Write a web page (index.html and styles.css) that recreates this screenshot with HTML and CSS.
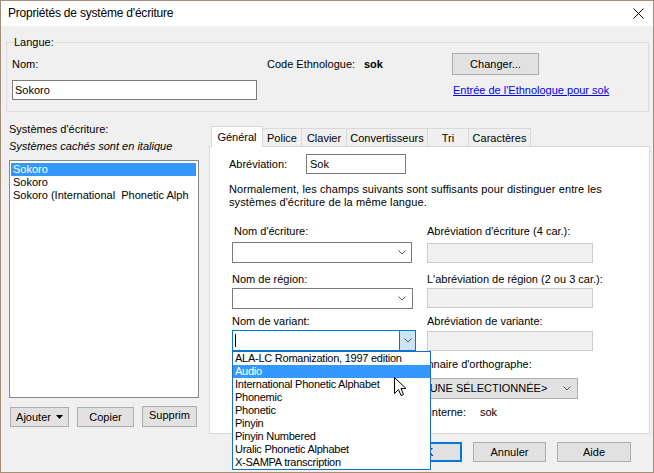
FILE: index.html
```html
<!DOCTYPE html>
<html lang="fr">
<head>
<meta charset="utf-8">
<title>Propriétés de système d'écriture</title>
<link rel="stylesheet" href="styles.css">
</head>
<body>
<div class="window">
  <div class="titlebar">
    <span class="title">Propriétés de système d'écriture</span>
    <svg class="close" width="11" height="11" viewBox="0 0 11 11"><path d="M0.5 0.5 L10.5 10.5 M10.5 0.5 L0.5 10.5" stroke="#000" stroke-width="1" fill="none"/></svg>
  </div>

  <div class="group">
    <span class="legend">Langue:</span>
    <div class="grow r1">
      <span class="lbl-nom">Nom:</span>
      <span class="lbl-code">Code Ethnologue:</span>
      <b class="code">sok</b>
      <div class="btn btn-changer">Changer...</div>
    </div>
    <div class="grow r2">
      <div class="input input-nom">Sokoro</div>
      <a class="link" href="#">Entrée de l'Ethnologue pour sok</a>
    </div>
  </div>

  <div class="main">
    <div class="left">
      <div class="lbl">Systèmes d'écriture:</div>
      <div class="lbl hint">Systèmes cachés sont en italique</div>
      <div class="listbox">
        <div class="item selected">Sokoro</div>
        <div class="item">Sokoro</div>
        <div class="item">Sokoro (International&nbsp; Phonetic Alph</div>
      </div>
      <div class="left-buttons">
        <div class="btn btn-ajouter">Ajouter <svg class="tri" width="7" height="4" viewBox="0 0 7 4"><path d="M0 0 H7 L3.5 4 Z" fill="#000"/></svg></div>
        <div class="btn btn-copier">Copier</div>
        <div class="btn btn-supprim">Supprim</div>
      </div>
    </div>

    <div class="tabcol">
      <div class="tabhead">
        <div class="tab active t-gen">Général</div>
        <div class="tab t-pol">Police</div>
        <div class="tab t-cla">Clavier</div>
        <div class="tab t-con">Convertisseurs</div>
        <div class="tab t-tri">Tri</div>
        <div class="tab t-car">Caractères</div>
      </div>
      <div class="pane">
        <div class="abbr-row">
          <span class="abbr-lbl">Abréviation:</span>
          <div class="input input-abbr">Sok</div>
        </div>
        <p class="para">Normalement, les champs suivants sont suffisants pour distinguer entre les<br>systèmes d'écriture de la même langue.</p>

        <div class="fields">
          <div class="frow frow1">
            <div class="fcell">
              <div class="flbl first">Nom d'écriture:</div>
              <div class="combo c1"><svg class="chev" width="8" height="5" viewBox="0 0 8 5"><path d="M0.5 0.5 L4 4 L7.5 0.5" stroke="#555" fill="none"/></svg></div>
            </div>
            <div class="fcell right">
              <div class="flbl">Abréviation d'écriture (4 car.):</div>
              <div class="dis d1"></div>
            </div>
          </div>
          <div class="frow frow2">
            <div class="fcell">
              <div class="flbl">Nom de région:</div>
              <div class="combo c2"><svg class="chev" width="8" height="5" viewBox="0 0 8 5"><path d="M0.5 0.5 L4 4 L7.5 0.5" stroke="#555" fill="none"/></svg></div>
            </div>
            <div class="fcell right">
              <div class="flbl">L'abréviation de région (2 ou 3 car.):</div>
              <div class="dis d2"></div>
            </div>
          </div>
          <div class="frow frow3">
            <div class="fcell">
              <div class="flbl">Nom de variant:</div>
              <div class="combo focus">
                <div class="combo-edit"><span class="caret"></span></div>
                <div class="combo-btn"><svg class="chev" width="8" height="5" viewBox="0 0 8 5"><path d="M0.5 0.5 L4 4 L7.5 0.5" stroke="#555" fill="none"/></svg></div>
              </div>
            </div>
            <div class="fcell right">
              <div class="flbl">Abréviation de variante:</div>
              <div class="dis d3"></div>
            </div>
          </div>
        </div>

        <div class="lower">
          <div class="flbl">Dictionnaire d'orthographe:</div>
          <div class="combo gray">
            <span class="combo-text">&lt;AUCUNE SÉLECTIONNÉE&gt;</span>
            <svg class="chev" width="8" height="5" viewBox="0 0 8 5"><path d="M0.5 0.5 L4 4 L7.5 0.5" stroke="#555" fill="none"/></svg>
          </div>
          <div class="code-row">
            <span class="code-lbl">Code interne:</span>
            <span>sok</span>
          </div>
        </div>
      </div>
      <div class="footer">
        <div class="btn btn-ok">OK</div>
        <div class="btn btn-foot">Annuler</div>
        <div class="btn btn-foot aide">Aide</div>
      </div>
    </div>
  </div>

  <div class="dropdown">
    <div class="ditem">ALA-LC Romanization, 1997 edition</div>
    <div class="ditem hl">Audio</div>
    <div class="ditem">International Phonetic Alphabet</div>
    <div class="ditem">Phonemic</div>
    <div class="ditem">Phonetic</div>
    <div class="ditem">Pinyin</div>
    <div class="ditem">Pinyin Numbered</div>
    <div class="ditem">Uralic Phonetic Alphabet</div>
    <div class="ditem">X-SAMPA transcription</div>
  </div>

  <svg class="cursor" width="13" height="20" viewBox="0 0 13 20"><path d="M0.5 0.5 L0.5 16.5 L4.5 12.5 L7 18.5 L9.5 17.5 L7 11.5 L12 11.5 Z" fill="#fff" stroke="#000" stroke-width="1" stroke-linejoin="miter"/></svg>
</div>
</body>
</html>
```

FILE: styles.css
```css
* { box-sizing: border-box; }
html, body { margin: 0; padding: 0; }
body {
  font-family: "Liberation Sans", Arial, sans-serif;
  font-size: 11px;
  line-height: 13px;
  color: #000;
  background: #fff;
}
.window {
  position: relative;
  width: 654px;
  height: 473px;
  border: 1px solid #a58e76;
  background: #f0f0f0;
  overflow: hidden;
}
.titlebar {
  height: 25px;
  background: #fff;
  display: flex;
  align-items: center;
  justify-content: space-between;
  padding: 0 9px 0 7px;
}
.title { font-size: 12px; letter-spacing: -0.2px; }
.close { display: block; }

/* group box */
.group {
  position: relative;
  margin: 16px 4px 0 5px;
  height: 70px;
  border: 1px solid #dcdcdc;
  padding: 10px 0 0 5px;
}
.legend {
  position: absolute;
  top: -7px;
  left: 6px;
  padding: 0 1px;
  background: #f0f0f0;
}
.grow { display: flex; align-items: center; }
.r1 { height: 22px; }
.r2 { height: 20px; margin-top: 5px; }
.lbl-nom { width: 255px; }
.lbl-code { width: 97px; }
.code { width: 88px; font-weight: bold; }
.btn {
  display: flex;
  align-items: center;
  justify-content: center;
  background: #e1e1e1;
  border: 1px solid #adadad;
  height: 20px;
}
.btn-changer { width: 87px; height: 22px; }
.input {
  background: #fff;
  border: 1px solid #7a7a7a;
  height: 20px;
  display: flex;
  align-items: center;
}
.input-nom { width: 245px; padding-left: 2px; }
.link { margin-left: 196px; color: #0000ff; text-decoration: underline; }

/* main */
.main { display: flex; padding-left: 8px; }
.left { width: 190px; padding-top: 11px; }
.hint { font-style: italic; margin-top: 4px; }
.listbox {
  margin-top: 7px;
  height: 238px;
  border: 1px solid #828790;
  background: #fff;
  padding: 1px 2px 0 1px;
}
.item { height: 13px; padding-left: 2px; white-space: nowrap; overflow: hidden; }
.item.selected { background: #3399ff; color: #fff; margin-top: 1px; }
.left-buttons { display: flex; align-items: flex-start; margin-top: 9px; }
.btn-ajouter { width: 59px; margin-left: 1px; gap: 5px; }
.tri { display: block; }
.btn-copier { width: 57px; margin-left: 8px; }
.btn-supprim { width: 55px; height: 21px; margin-left: 8px; margin-top: -1px; align-items: flex-start; padding-top: 2px; }

/* tabs */
.tabcol { width: 441px; margin-left: 10px; margin-top: 14px; }
.tabhead { display: flex; align-items: flex-end; height: 20px; padding-left: 2px; }
.tab {
  height: 18px;
  border: 1px solid #d9d9d9;
  border-bottom: none;
  background: #f0f0f0;
  margin-left: -1px;
  display: flex;
  align-items: center;
  justify-content: center;
  padding-top: 1px;
}
.tab.active {
  height: 21px;
  margin-left: 0;
  margin-bottom: -1px;
  background: #fff;
  position: relative;
  z-index: 1;
  padding-top: 0;
}
.t-gen { width: 52px; }
.t-pol { width: 40px; }
.t-cla { width: 46px; }
.t-con { width: 82px; }
.t-tri { width: 42px; }
.t-car { width: 63px; }
.pane {
  height: 288px;
  border: 1px solid #d9d9d9;
  background: #fff;
  padding: 7px 0 0 19px;
}
.abbr-row { display: flex; align-items: center; height: 20px; }
.abbr-lbl { width: 77px; }
.input-abbr { width: 100px; padding-left: 3px; }
.para { margin: 9px 0 0 0; letter-spacing: 0.1px; }
.fields { margin-left: 3px; }
.frow { display: flex; }
.frow1 { margin-top: 16px; }
.frow2 { margin-top: 10px; }
.frow3 { margin-top: 6px; }
.fcell { width: 195px; }
.fcell.right { width: 166px; }
.flbl { white-space: nowrap; }
.flbl.first { padding-left: 2px; }
.combo {
  background: #fff;
  border: 1px solid #7a7a7a;
  height: 21px;
  display: flex;
  align-items: center;
  justify-content: flex-end;
  padding-right: 5px;
}
.chev { display: block; }
.c1 { width: 180px; margin-top: 4px; }
.c2 { width: 181px; margin-top: 2px; padding-right: 6px; }
.combo.focus {
  width: 184px;
  margin-top: 2px;
  border-color: #0078d7;
  padding-right: 0;
  align-items: stretch;
}
.combo-edit { flex: 1; display: flex; align-items: center; padding-left: 2px; }
.caret { display: block; width: 1px; height: 13px; background: #000; }
.combo-btn {
  width: 16px;
  border-left: 1px solid #0078d7;
  background: #cce4f7;
  display: flex;
  align-items: center;
  justify-content: center;
}
.dis {
  width: 166px;
  height: 20px;
  background: #f0f0f0;
  border: 1px solid #cccccc;
}
.d1 { margin-top: 5px; }
.d2 { margin-top: 2px; }
.d3 { margin-top: 3px; }
.lower { margin-left: 171px; margin-top: 7px; }
.combo.gray {
  width: 182px;
  margin-left: -4px;
  margin-top: 7px;
  background: #e1e1e1;
  border-color: #adadad;
  justify-content: space-between;
  padding: 0 6px 0 3px;
}
.code-row { display: flex; margin-top: 7px; }
.code-lbl { width: 80px; }

.footer {
  display: flex;
  justify-content: flex-end;
  gap: 11px;
  margin-top: 8px;
  padding-right: 19px;
}
.btn-ok { width: 73px; border: 2px solid #0078d7; }
.btn-foot { width: 73px; }
.btn-foot.aide { width: 74px; }

/* dropdown overlay */
.dropdown {
  position: absolute;
  left: 231px;
  top: 350px;
  width: 199px;
  height: 119px;
  background: #fff;
  border: 1px solid #1a6fc4;
  z-index: 5;
}
.ditem { height: 13px; padding-left: 2px; white-space: nowrap; letter-spacing: -0.25px; }
.ditem.hl { background: #3399ff; color: #fff; }
.cursor { position: absolute; left: 393px; top: 376px; z-index: 6; }
```
